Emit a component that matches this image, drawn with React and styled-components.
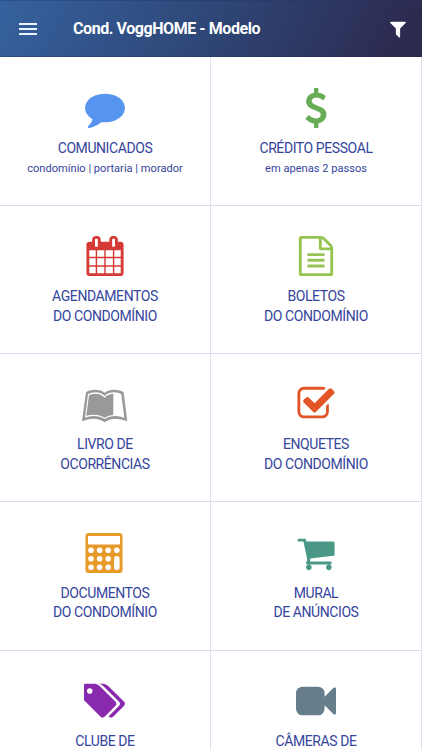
import styled, { createGlobalStyle } from 'styled-components';

const GlobalStyle = createGlobalStyle`
  * {
    box-sizing: border-box;
  }

  body {
    margin: 0;
    overflow: hidden;
    background: #fff;
    font-family: Roboto, 'Liberation Sans', sans-serif;
  }
`;

const Screen = styled.div`
  width: 422px;
  height: 750px;
  overflow: hidden;
`;

const Header = styled.header`
  display: flex;
  align-items: center;
  height: 57.4px;
  padding: 0 14px 0 19px;
  border-top: 1px solid rgba(25, 50, 100, 0.3);
  border-bottom: 1px solid rgba(25, 35, 80, 0.25);
  background: linear-gradient(118deg, #36629f 0%, #2e4676 50%, #2d2a50 94%) border-box;
  color: #fff;
`;

const MenuButton = styled.button`
  display: flex;
  flex-direction: column;
  gap: 3px;
  width: 18px;
  padding: 0;
  border: 0;
  background: none;
`;

const MenuBar = styled.span`
  height: 2px;
  background: #eef4fc;
`;

const Title = styled.h1`
  flex: 1;
  margin: 0 0 0 36px;
  font-size: 16px;
  font-weight: 700;
  line-height: 20px;
  letter-spacing: -0.43px;
`;

const FilterButton = styled.button`
  display: flex;
  padding: 0;
  border: 0;
  background: none;
  color: #fff;
`;

const Grid = styled.main`
  display: grid;
  grid-template-columns: 211px 211px;
  grid-auto-rows: 148.3px;
`;

const Tile = styled.section`
  display: flex;
  flex-direction: column;
  align-items: center;
  padding-top: 30.5px;
  border-right: 1px solid #e0e0f6;
  border-bottom: 1px solid #dcdcf4;
  color: #35459c;
  text-align: center;
`;

const IconBox = styled.div`
  display: flex;
  align-items: center;
  justify-content: center;
  height: 40px;
  margin-left: ${({ $shift }) => $shift || 0}px;
  color: ${({ $color }) => $color};
`;

const Label = styled.span`
  display: block;
  font-size: 14px;
  line-height: 19.6px;
  letter-spacing: -0.42px;

  ${IconBox} + & {
    margin-top: 11px;
  }
`;

const Note = styled.span`
  margin-top: 2px;
  font-size: 11.1px;
  line-height: 18px;
`;

const Glyph = ({ d, width = 1792, size = 40 }) => (
  <svg width={(width / 1792) * size} height={size} viewBox={`0 0 ${width} 1792`} fill="currentColor">
    <path d={d} />
  </svg>
);

const Calculator = () => (
  <svg width="38" height="40" viewBox="0 0 38 40">
    <rect x="0.5" y="0" width="37" height="40" rx="3" fill="currentColor" />
    <g fill="#fff">
      <rect x="3" y="3" width="32" height="8.5" rx="1" />
      {[17.2, 25.8, 34.3].map((y) => [6, 14.6, 23.2].map((x) => <circle key={`${x}-${y}`} cx={x} cy={y} r="2.8" />))}
      <circle cx="31.8" cy="17.2" r="2.8" />
      <rect x="29" y="22.9" width="5.6" height="14.2" rx="2.8" />
    </g>
  </svg>
);

const Book = () => (
  <svg width="45.3" height="40" viewBox="0 -17 136 120">
    <path
      fill="currentColor"
      d="M12 8Q20 0 39 0Q58 0 68 9Q78 0 97 0Q116 0 125 8L136 95Q118 87 101 87Q82 87 68 98Q54 87 35 87Q18 87 0 95Z"
    />
    <path
      fill="#fff"
      d="M18 14Q27 8 40 8Q58 8 68 19Q78 8 96 8Q110 8 118 14L127 84Q114 79 101 79Q82 79 68 88Q54 79 35 79Q22 79 9 84Z"
    />
    <path
      fill="currentColor"
      d="M21 17Q29 12 40 12Q57 12 68 24Q77 13 94 12V76Q79 77 68 84Q54 75 35 75Q23 75 13 78Z"
    />
  </svg>
);

const paths = {
  filter:
    'M1595 295q17 41-14 70l-493 493v742q0 42-39 59-13 5-25 5-27 0-45-19l-256-256q-19-19-19-45v-486l-493-493q-31-29-14-70 17-39 59-39h1280q42 0 59 39z',
  comment:
    'M1792 896q0 174-120 321.5t-326 233-450 85.5q-70 0-145-8-198 175-460 242-49 14-114 22-17 2-30.5-9t-17.5-29v-1q-3-4-.5-12t2-10 4.5-9.5l6-9 7-8.5 8-9q7-8 31-34.5t34.5-38 31-39.5 32.5-51 27-59 26-76q-157-89-247.5-220t-90.5-281q0-174 120-321.5t326-233 450-85.5 450 85.5 326 233 120 321.5z',
  dollar:
    'M1362 1185q0 153-99.5 263.5t-258.5 136.5v175q0 14-9 23t-23 9h-135q-13 0-22.5-9.5t-9.5-22.5v-175q-66-9-127.5-31t-101.5-44.5-74-48-46.5-37.5-17.5-18q-17-21-2-41l103-135q7-10 23-12 15-2 24 9l2 2q113 99 243 125 37 8 74 8 81 0 142.5-43t61.5-122q0-28-15-53t-33.5-42-58.5-37.5-66-32-80-32.5q-39-16-61.5-25t-61.5-26.5-62.5-31-56.5-35.5-53.5-42.5-43.5-49-35.5-58-21-66.5-8.5-78q0-138 98-242t255-134v-180q0-13 9.5-22.5t22.5-9.5h135q14 0 23 9t9 23v176q57 6 110.5 23t87 33.5 63.5 37.5 39 29 15 14q17 18 5 38l-81 146q-8 15-23 16-14 3-27-7-3-3-14.5-12t-39-26.5-58.5-32-74.5-26-85.5-11.5q-95 0-155 43t-60 111q0 26 8.5 48t29.5 41.5 39.5 33 56 31 60.5 27 70 27.5q53 20 81 31.5t76 35 75.5 42.5 62 50 53 63.5 31.5 76.5 13 94z',
  calendar:
    'M192 1664h288v-288h-288v288zm352 0h320v-288h-320v288zm-352-352h288v-320h-288v320zm352 0h320v-320h-320v320zm-352-384h288v-288h-288v288zm736 736h320v-288h-320v288zm-384-736h320v-288h-320v288zm768 736h288v-288h-288v288zm-384-352h320v-320h-320v320zm-352-864v-288q0-13-9.5-22.5t-22.5-9.5h-64q-13 0-22.5 9.5t-9.5 22.5v288q0 13 9.5 22.5t22.5 9.5h64q13 0 22.5-9.5t9.5-22.5zm736 864h288v-320h-288v320zm-384-384h320v-288h-320v288zm384 0h288v-288h-288v288zm32-480v-288q0-13-9.5-22.5t-22.5-9.5h-64q-13 0-22.5 9.5t-9.5 22.5v288q0 13 9.5 22.5t22.5 9.5h64q13 0 22.5-9.5t9.5-22.5zm384-64v1280q0 52-38 90t-90 38h-1408q-52 0-90-38t-38-90v-1280q0-52 38-90t90-38h128v-96q0-66 47-113t113-47h64q66 0 113 47t47 113v96h384v-96q0-66 47-113t113-47h64q66 0 113 47t47 113v96h128q52 0 90 38t38 90z',
  file:
    'M1596 380q28 28 48 76t20 88v1152q0 40-28 68t-68 28h-1344q-40 0-68-28t-28-68v-1600q0-40 28-68t68-28h896q40 0 88 20t76 48zm-444-244v376h376q-10-29-22-41l-313-313q-12-12-41-22zm384 1528v-1024h-416q-40 0-68-28t-28-68v-416h-768v1536h1280zm-1024-864q0-14 9-23t23-9h704q14 0 23 9t9 23v64q0 14-9 23t-23 9h-704q-14 0-23-9t-9-23v-64zm736 224q14 0 23 9t9 23v64q0 14-9 23t-23 9h-704q-14 0-23-9t-9-23v-64q0-14 9-23t23-9h704zm0 256q14 0 23 9t9 23v64q0 14-9 23t-23 9h-704q-14 0-23-9t-9-23v-64q0-14 9-23t23-9h704z',
  check:
    'M1472 930v318q0 119-84.5 203.5t-203.5 84.5h-832q-119 0-203.5-84.5t-84.5-203.5v-832q0-119 84.5-203.5t203.5-84.5h832q63 0 117 25 15 7 18 23 3 17-9 29l-49 49q-10 10-23 10-3 0-9-2-23-6-45-6h-832q-66 0-113 47t-47 113v832q0 66 47 113t113 47h832q66 0 113-47t47-113v-254q0-13 9-22l64-64q10-10 23-10 6 0 12 3 20 8 20 29zm231-489l-814 814q-24 24-57 24t-57-24l-430-430q-24-24-24-57t24-57l110-110q24-24 57-24t57 24l263 263 647-647q24-24 57-24t57 24l110 110q24 24 24 57t-24 57z',
  cart:
    'M704 1536q0 52-38 90t-90 38-90-38-38-90 38-90 90-38 90 38 38 90zm896 0q0 52-38 90t-90 38-90-38-38-90 38-90 90-38 90 38 38 90zm128-1088v512q0 24-16.5 42.5t-40.5 21.5l-1044 122q13 60 13 70 0 16-24 64h920q26 0 45 19t19 45-19 45-45 19h-1024q-26 0-45-19t-19-45q0-11 8-31.5t16-36 21.5-40 15.5-29.5l-177-823h-204q-26 0-45-19t-19-45 19-45 45-19h256q16 0 28.5 6.5t19.5 15.5 13 24.5 8 26 5.5 29.5 4.5 26h1201q26 0 45 19t19 45z',
  tags:
    'M384 448q0-53-37.5-90.5t-90.5-37.5-90.5 37.5-37.5 90.5 37.5 90.5 90.5 37.5 90.5-37.5 37.5-90.5zm1067 576q0 53-37 90l-491 492q-39 37-91 37-53 0-90-37l-715-716q-38-37-64.5-101t-26.5-117v-416q0-52 38-90t90-38h416q53 0 117 26.5t102 64.5l715 714q37 39 37 91zm384 0q0 53-37 90l-491 492q-39 37-91 37-36 0-59-14t-53-45l470-470q37-37 37-90 0-52-37-91l-715-714q-38-38-102-64.5t-117-26.5h224q53 0 117 26.5t102 64.5l715 714q37 39 37 91z',
  video:
    'M1792 352v1088q0 42-39 59-13 5-25 5-27 0-45-19l-403-403v166q0 119-84.5 203.5t-203.5 84.5h-704q-119 0-203.5-84.5t-84.5-203.5v-704q0-119 84.5-203.5t203.5-84.5h704q119 0 203.5 84.5t84.5 203.5v165l403-402q18-19 45-19 12 0 25 5 39 17 39 59z',
};

const tiles = [
  { color: '#5595f0', icon: <Glyph d={paths.comment} />, lines: ['COMUNICADOS'], note: 'condomínio | portaria | morador' },
  { color: '#67ad55', icon: <Glyph d={paths.dollar} />, lines: ['CRÉDITO PESSOAL'], note: 'em apenas 2 passos' },
  { color: '#d63a35', icon: <Glyph d={paths.calendar} />, lines: ['AGENDAMENTOS', 'DO CONDOMÍNIO'] },
  { color: '#97c353', icon: <Glyph d={paths.file} />, lines: ['BOLETOS', 'DO CONDOMÍNIO'] },
  { color: '#999', icon: <Book />, lines: ['LIVRO DE', 'OCORRÊNCIAS'] },
  { color: '#e35427', icon: <Glyph d={paths.check} />, lines: ['ENQUETES', 'DO CONDOMÍNIO'] },
  { color: '#e7992a', icon: <Calculator />, shift: -3, lines: ['DOCUMENTOS', 'DO CONDOMÍNIO'] },
  { color: '#4b9786', icon: <Glyph d={paths.cart} />, lines: ['MURAL', 'DE ANÚNCIOS'] },
  { color: '#8929ad', icon: <Glyph d={paths.tags} width={1835} />, shift: -1, lines: ['CLUBE DE'] },
  { color: '#667e8c', icon: <Glyph d={paths.video} />, lines: ['CÂMERAS DE'] },
];

const App = () => (
  <Screen>
    <GlobalStyle />
    <Header>
      <MenuButton aria-label="Menu">
        <MenuBar />
        <MenuBar />
        <MenuBar />
      </MenuButton>
      <Title>Cond. VoggHOME - Modelo</Title>
      <FilterButton aria-label="Filtrar">
        <Glyph d={paths.filter} size={20} />
      </FilterButton>
    </Header>
    <Grid>
      {tiles.map(({ color, icon, shift, lines, note }) => (
        <Tile key={lines.join(' ')}>
          <IconBox $color={color} $shift={shift}>
            {icon}
          </IconBox>
          {lines.map((line) => (
            <Label key={line}>{line}</Label>
          ))}
          {note && <Note>{note}</Note>}
        </Tile>
      ))}
    </Grid>
  </Screen>
);

export default App;
